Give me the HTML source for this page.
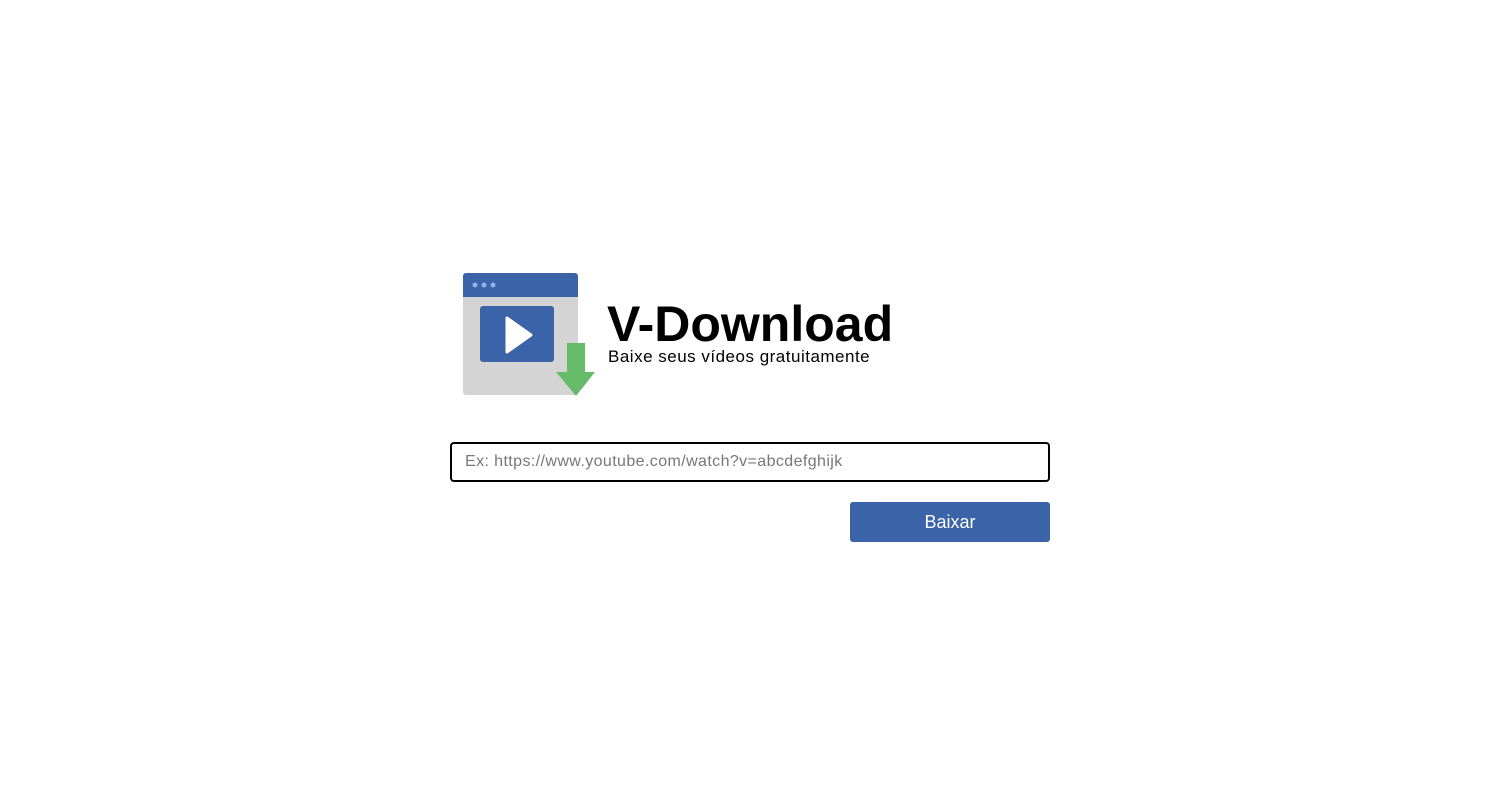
<!DOCTYPE html>
<html><head><meta charset="utf-8"><style>
body{margin:0;width:1500px;height:800px;background:#fff;font-family:"Liberation Sans",sans-serif;position:relative;overflow:hidden}
.t{position:absolute;left:607px;top:294px;font-size:50px;font-weight:bold;color:#000;letter-spacing:0px;line-height:60px}
.s{position:absolute;left:608px;top:347px;font-size:17px;color:#000;line-height:20px;letter-spacing:0.5px}
.in{position:absolute;left:450px;top:442px;width:596px;height:36px;border:2px solid #000;border-radius:4px;box-sizing:content-box}
.in span{position:absolute;left:13px;top:9px;font-size:16px;color:#777;letter-spacing:0.4px}
.b{position:absolute;left:850px;top:502px;width:200px;height:40px;background:#3b64a8;border-radius:3px;color:#fff;font-size:18px;text-align:center;line-height:40px}
</style></head><body>
<svg style="position:absolute;left:450px;top:265px" width="160" height="140">
<rect x="13" y="8" width="115" height="122" rx="3" fill="#d4d4d4"/>
<path d="M16 8h109a3 3 0 0 1 3 3v21H13V11a3 3 0 0 1 3-3z" fill="#3b64a8"/>
<circle cx="25" cy="20" r="2.5" fill="#8fb4e8"/><circle cx="34" cy="20" r="2.5" fill="#8fb4e8"/><circle cx="43" cy="20" r="2.5" fill="#8fb4e8"/>
<rect x="30" y="41" width="74" height="56" rx="3" fill="#3b64a8"/>
<path d="M57 53 L81 70 L57 87 Z" fill="#fff" stroke="#fff" stroke-width="3" stroke-linejoin="round"/>
<path d="M117 78h18v29h10l-19 24-20-24h11z" fill="#66bb6a"/>
</svg>
<div class="t">V-Download</div>
<div class="s">Baixe seus vídeos gratuitamente</div>
<div class="in"><span>Ex: https://www.youtube.com/watch?v=abcdefghijk</span></div>
<div class="b">Baixar</div>
</body></html>
